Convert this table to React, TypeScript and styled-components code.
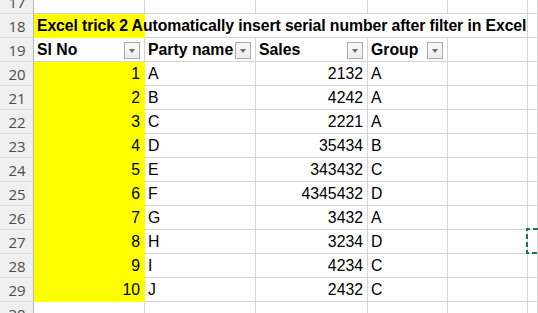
import { Fragment } from "react";
import styled, { createGlobalStyle } from "styled-components";

const GlobalStyle = createGlobalStyle`
  html, body {
    margin: 0;
    padding: 0;
    background: #ffffff;
    overflow: hidden;
  }
`;

const GRID = "#d4d4d4";
const YELLOW = "#ffff00";

const Viewport = styled.div`
  width: 538px;
  height: 313px;
  overflow: hidden;
  background: #ffffff;
`;

const Sheet = styled.div`
  display: grid;
  grid-template-columns: 34px 111px 111px 112px 80px 80px 1fr;
  grid-auto-rows: 24px;
  margin-top: -10px;
`;

const RowHead = styled.div`
  display: flex;
  align-items: center;
  justify-content: center;
  background: #f0f0f0;
  border-right: 1px solid #b8b8b8;
  border-bottom: 1px solid #d9d9d9;
  font-family: "Open Sans", "Liberation Sans", sans-serif;
  font-size: 15px;
  color: #4c4c4c;
  padding-left: 1px;
`;

const Cell = styled.div<{
  $fill?: boolean;
  $right?: boolean;
  $bold?: boolean;
  $spill?: boolean;
  $noEdge?: boolean;
}>`
  position: relative;
  display: flex;
  align-items: flex-end;
  justify-content: ${(p) => (p.$right ? "flex-end" : "flex-start")};
  padding: 0 4px 2px 3px;
  background: ${(p) => (p.$fill ? YELLOW : "transparent")};
  border-right: 1px solid
    ${(p) => (p.$noEdge ? "transparent" : p.$fill ? YELLOW : GRID)};
  border-bottom: 1px solid ${(p) => (p.$fill ? YELLOW : GRID)};
  font-family: "Liberation Sans", Arial, sans-serif;
  font-size: 15.8px;
  font-weight: ${(p) => (p.$bold ? 700 : 400)};
  line-height: 18px;
  color: #000000;
  white-space: nowrap;
  overflow: ${(p) => (p.$spill ? "visible" : "hidden")};
  min-width: 0;
`;

const Title = styled.span`
  letter-spacing: -0.1px;
`;

const HeadText = styled.span`
  flex: 1;
  min-width: 0;
  overflow: hidden;
  white-space: nowrap;
`;

const FilterButton = styled.span`
  flex: none;
  width: 16px;
  height: 17px;
  box-sizing: border-box;
  border: 1px solid #a9a9a9;
  background: linear-gradient(#fbfbfb, #ececec);
  display: flex;
  align-items: center;
  justify-content: center;

  &::after {
    content: "";
    border-left: 3.5px solid transparent;
    border-right: 3.5px solid transparent;
    border-top: 4px solid #6b6b6b;
    margin-top: 1px;
  }
`;

const Marquee = styled.svg`
  position: absolute;
  left: -2px;
  top: -2px;
  width: 60px;
  height: 26px;
  overflow: visible;
`;

type Row = { no: number; party: string; sales: number; group: string };

const rows: Row[] = [
  { no: 1, party: "A", sales: 2132, group: "A" },
  { no: 2, party: "B", sales: 4242, group: "A" },
  { no: 3, party: "C", sales: 2221, group: "A" },
  { no: 4, party: "D", sales: 35434, group: "B" },
  { no: 5, party: "E", sales: 343432, group: "C" },
  { no: 6, party: "F", sales: 4345432, group: "D" },
  { no: 7, party: "G", sales: 3432, group: "A" },
  { no: 8, party: "H", sales: 3234, group: "D" },
  { no: 9, party: "I", sales: 4234, group: "C" },
  { no: 10, party: "J", sales: 2432, group: "C" },
];

const HeaderCell = ({ label }: { label: string }) => (
  <Cell $bold>
    <HeadText>{label}</HeadText>
    <FilterButton />
  </Cell>
);

export default function App() {
  return (
    <Viewport>
      <GlobalStyle />
      <Sheet>
        {/* row 17 */}
        <RowHead>17</RowHead>
        <Cell />
        <Cell />
        <Cell />
        <Cell />
        <Cell />
        <Cell />

        {/* row 18: title spills over B..E */}
        <RowHead>18</RowHead>
        <Cell $fill $bold $spill>
          <Title>
            Excel trick 2 Automatically insert serial number after filter in Excel
          </Title>
        </Cell>
        <Cell $noEdge />
        <Cell $noEdge />
        <Cell $noEdge />
        <Cell />
        <Cell />

        {/* row 19: filter headers */}
        <RowHead>19</RowHead>
        <HeaderCell label="Sl No" />
        <HeaderCell label="Party name" />
        <HeaderCell label="Sales" />
        <HeaderCell label="Group" />
        <Cell />
        <Cell />

        {rows.map((r, i) => (
          <Fragment key={r.no}>
            <RowHead>{20 + i}</RowHead>
            <Cell $fill $right>
              {r.no}
            </Cell>
            <Cell>{r.party}</Cell>
            <Cell $right>{r.sales}</Cell>
            <Cell>{r.group}</Cell>
            <Cell />
            <Cell $spill={r.no === 8}>
              {r.no === 8 && (
                <Marquee>
                  <path
                    d="M60 1 H1 V25 H60"
                    fill="none"
                    stroke="#217346"
                    strokeWidth="2"
                    strokeDasharray="5 3"
                  />
                </Marquee>
              )}
            </Cell>
          </Fragment>
        ))}

        {/* row 30 */}
        <RowHead>30</RowHead>
        <Cell />
        <Cell />
        <Cell />
        <Cell />
        <Cell />
        <Cell />
      </Sheet>
    </Viewport>
  );
}
